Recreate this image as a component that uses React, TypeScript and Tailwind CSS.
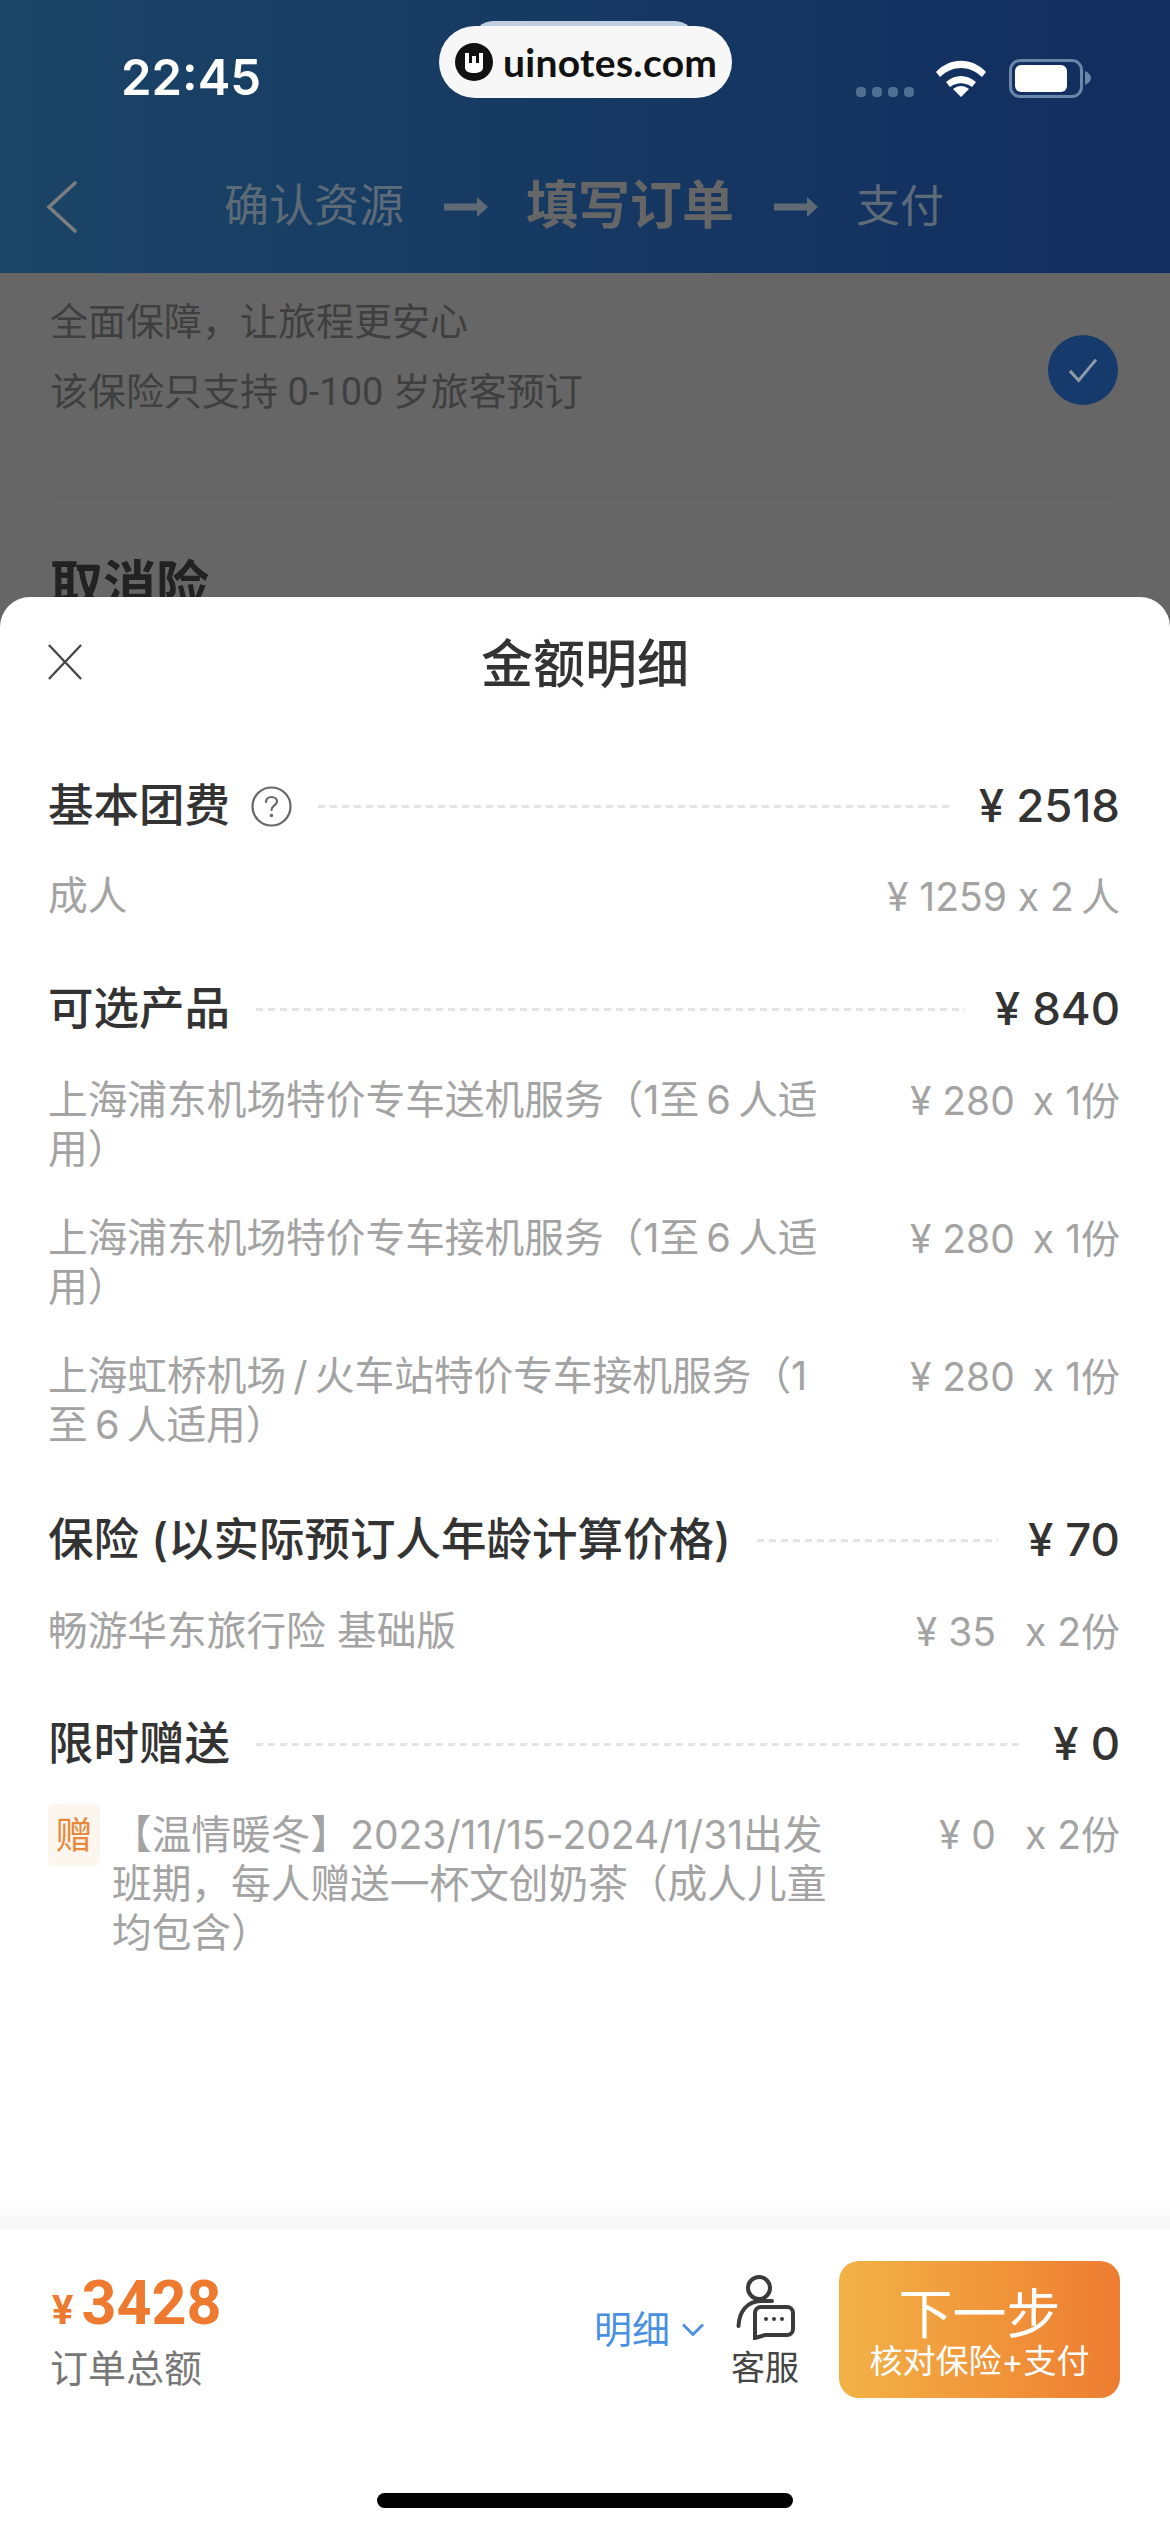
import React from 'react';

interface SubRow {
  text: React.ReactNode;
  price: string;
}

const DOTS = [0, 1, 2, 3];

const Line = () => (
  <div className="h-[3px] bg-[repeating-linear-gradient(90deg,#e4e4e4_0,#e4e4e4_7px,transparent_7px,transparent_12px)]" />
);

const Heading = ({ title, amount, help }: { title: string; amount: string; help?: boolean }) => (
  <div className="flex items-center h-[60px] text-[45.5px] font-medium text-[#333]">
    <span className="whitespace-nowrap">{title}</span>
    {help && (
      <svg viewBox="0 0 41 41" className="w-[41px] h-[41px] ml-[21px] text-[#666]" fill="none" stroke="currentColor">
        <circle cx="20.5" cy="20.5" r="19" strokeWidth="2.2" />
        <path d="M15 16c0-3 2.400-5 5.500-5s5.500 2 5.500 4.500c0 4-5.500 4-5.500 8.500" strokeWidth="2.2" strokeLinecap="round" />
        <circle cx="20.500" cy="29.500" r="1.700" fill="currentColor" stroke="none" />
      </svg>
    )}
    <div className="flex-1 ml-[26px] mr-[30px]">
      <Line />
    </div>
    <span className="whitespace-nowrap text-[45.5px]">{amount}</span>
  </div>
);

const Sub = ({ text, price }: SubRow) => (
  <div className="flex justify-between text-[39.7px] leading-[49px] text-[#a3a3a3]">
    <div className="w-[785px]">{text}</div>
    <div className="whitespace-nowrap text-[39px]">{price}</div>
  </div>
);

const Arrow = () => (
  <svg viewBox="0 0 44 20" className="w-[44px] h-[20px] text-[#5f6a75]" fill="currentColor">
    <path d="M0 6.500h33V0l11 10-11 10v-6.500H0z" />
  </svg>
);

const products: SubRow[] = [
  { text: '上海浦东机场特价专车送机服务（1至\u20096\u2009人适用）', price: '¥ 280\u00a0\u2009x 1份' },
  { text: '上海浦东机场特价专车接机服务（1至\u20096\u2009人适用）', price: '¥ 280\u00a0\u2009x 1份' },
  { text: '上海虹桥机场\u2009/\u2009火车站特价专车接机服务（1至\u20096\u2009人适用）', price: '¥ 280\u00a0\u2009x 1份' },
];

export default function App() {
  return (
    <div className='relative w-[1170px] h-[2532px] overflow-hidden bg-[#666666] [font-family:Roboto,"Noto_Sans_CJK_SC",sans-serif]'>
      {/* Header */}
      <div className="h-[273px] bg-gradient-to-r from-[#1b4466] to-[#122d5f]">
        <div className="flex items-center justify-between h-[156px] pl-[121px] pr-[79px]">
          <span className="text-[49px] font-semibold text-white [font-family:Inter,sans-serif]">22:45</span>
          <div className="flex items-center">
            <div className="flex gap-[6px] mr-[22px] mt-[28px]">
              {DOTS.map(d => (
                <i key={d} className="block w-[10px] h-[10px] rounded-[4px] bg-[#4f6e90]" />
              ))}
            </div>
            <svg viewBox="0 0 50 37" className="w-[50px] h-[37px]" fill="#fff">
              <path d="M0 12C14-3 36-3 50 12l-4 5C33 5 17 5 4 17z" />
              <path d="M10 22c9-8 21-8 30 0l-4 5c-7-5-15-5-22 0z" />
              <path d="M25 37l-8-8c5-4 11-4 16 0z" />
            </svg>
            <div className="flex items-center ml-[23px]">
              <div className="w-[74px] h-[39px] rounded-[11px] border-[3px] border-[#6a86a8] p-[3px]">
                <div className="w-[52px] h-full rounded-[6px] bg-white" />
              </div>
              <svg viewBox="0 0 6 14" className="w-[6px] h-[14px] ml-[2px]" fill="#6a86a8">
                <path d="M0 0c4 2 6 4 6 7s-2 5-6 7z" />
              </svg>
            </div>
          </div>
        </div>
        <div className="flex items-center h-[102px] pl-[46px] text-[#5d6a78]">
          <svg viewBox="0 0 32 52" className="w-[32px] h-[52px]" fill="none" stroke="#7b7d80" strokeWidth="3.6" strokeLinecap="round">
            <path d="M29 2L3 26l26 24" />
          </svg>
          <span className="ml-[146px] mr-[40px] text-[45px]">确认资源</span>
          <Arrow />
          <span className="ml-[38px] mr-[40px] text-[52px] font-bold text-[#666]">填写订单</span>
          <Arrow />
          <span className="ml-[38px] text-[44px]">支付</span>
        </div>
      </div>

      {/* Page behind the sheet */}
      <div className="pl-[50px] pr-[52px]">
        <div className="relative flex items-center justify-between h-[225px] border-b border-[#5f5f5f] pb-[30px]">
          <div className="mb-[26px] text-[38px] leading-[70px] text-[#3f3f3f]">
            <div>全面保障，让旅程更安心</div>
            <div>该保险只支持 0-100 岁旅客预订</div>
          </div>
          <div className="flex items-center justify-center w-[70px] h-[70px] rounded-full bg-[#163a6b]">
            <svg viewBox="0 0 36 30" className="w-[32px] h-[26px]" fill="none" stroke="#8f9aa8" strokeWidth="3.5">
              <path d="M3 16l10 11L33 3" />
            </svg>
          </div>
        </div>
        <div className="mt-[50px] text-[53px] font-bold text-[#222]">取消险</div>
      </div>

      {/* Watermark */}
      <div className="absolute left-[473px] top-[21px] w-[222px] h-[20px] rounded-t-[20px] bg-[#c0cfdd]" />
      <div className="absolute left-[439px] top-[26px] flex items-center w-[293px] h-[72px] rounded-[36px] bg-[#f7f7f7] pl-[16px]">
        <svg viewBox="0 0 38 38" className="w-[38px] h-[38px]">
          <circle cx="19" cy="19" r="19" fill="#111" />
          <path d="M10 10h4v10h3v-7h4v7h3V10h4v15c0 3-4 5-9 5s-9-2-9-5z" fill="#fff" />
        </svg>
        <span className="ml-[10px] text-[39px] tracking-[0.3px] font-bold text-[#111] [font-family:Lato,sans-serif]">uinotes.com</span>
      </div>

      {/* Amount details sheet */}
      <div className='absolute inset-x-0 bottom-0 flex flex-col h-[1935px] rounded-t-[30px] bg-white [font-family:Inter,"Noto_Sans_CJK_SC",sans-serif] [font-feature-settings:"calt"_0]'>
        <div className="relative flex items-center justify-center h-[136px]">
          <svg viewBox="0 0 38 38" className="absolute left-[47px] top-[47px] w-[36px] h-[36px]" fill="none" stroke="#444" strokeWidth="2.4">
            <path d="M2 1l34 36M36 1L2 37" />
          </svg>
          <span className="text-[52px] font-medium text-[#333]">金额明细</span>
        </div>

        <div className="flex-1 pt-[43px] pl-[48px] pr-[50px]">
          <Heading title="基本团费" amount="¥ 2518" help />
          <div className="mt-[36px]">
            <Sub text="成人" price={'¥ 1259 x 2\u2009人'} />
          </div>

          <div className="mt-[58px]">
            <Heading title="可选产品" amount="¥ 840" />
          </div>
          <div className="mt-[37px] flex flex-col gap-[40px]">
            {products.map((item, i) => (
              <Sub key={i} text={item.text} price={item.price} />
            ))}
          </div>

          <div className="mt-[60px]">
            <Heading title="保险 (以实际预订人年龄计算价格)" amount="¥ 70" />
          </div>
          <div className="mt-[37px]">
            <Sub text="畅游华东旅行险 基础版" price={'¥ 35\u00a0\u00a0\u2009x 2份'} />
          </div>

          <div className="mt-[58px]">
            <Heading title="限时赠送" amount="¥ 0" />
          </div>
          <div className="mt-[36px] flex justify-between text-[39.7px] leading-[49px] text-[#a3a3a3]">
            <div className="flex items-start w-[785px]">
              <span className="flex items-center justify-center shrink-0 w-[52px] h-[62px] -mt-[6px] rounded-[6px] bg-[#fdf6ef] text-[37px] text-[#e8883a]">赠</span>
              <div className="ml-[12px] w-[725px]">
                【温情暖冬】<span className="text-[39px]">2023/11/15-2024/1/31</span>出发班期，每人赠送一杯文创奶茶（成人儿童均包含）
              </div>
            </div>
            <div className="whitespace-nowrap text-[39px]">{'¥ 0\u00a0\u00a0\u2009x 2份'}</div>
          </div>
        </div>

        {/* Bottom bar */}
        <div className="relative h-[303px]">
          <div className="h-[30px] -mt-[30px] bg-gradient-to-b from-white to-[#f6f6f6]" />
          <div className="flex items-center h-[201px] pl-[52px] pr-[50px]">
            <div className="flex-1 mt-[5px]">
              <div className="flex items-baseline font-bold text-[#ee7a30] leading-[65px] [font-family:Roboto,sans-serif]">
                <span className="text-[40px]">¥</span>
                <span className="ml-[8px] text-[61px]">3428</span>
              </div>
              <div className="-ml-[2px] text-[38px] leading-[50px] text-[#777]">订单总额</div>
            </div>
            <div className="flex items-center text-[38px] text-[#4a90e2]">
              明细
              <svg viewBox="0 0 22 13" className="w-[22px] h-[13px] ml-[12px]" fill="none" stroke="currentColor" strokeWidth="2.800">
                <path d="M1 1.500l10 10 10-10" />
              </svg>
            </div>
            <div className="flex flex-col items-center ml-[26px] mt-[5px] w-[70px]">
              <svg viewBox="0 0 60 66" className="w-[60px] h-[66px]" fill="none" stroke="#3a3a3a" strokeWidth="4" strokeLinecap="round">
                <circle cx="24" cy="14" r="11" />
                <path d="M37 27H26C12 27 4 38 3.500 52" />
                <path d="M26 33h26a6 6 0 0 1 6 6v16a6 6 0 0 1-6 6H30l-10 3V39a6 6 0 0 1 6-6z" />
                <circle cx="31" cy="45" r="2" fill="#3a3a3a" stroke="none" />
                <circle cx="39" cy="45" r="2" fill="#3a3a3a" stroke="none" />
                <circle cx="47" cy="45" r="2" fill="#3a3a3a" stroke="none" />
              </svg>
              <span className="whitespace-nowrap text-[34px] leading-[44px] text-[#444] mt-[6px]">客服</span>
            </div>
            <div className="flex flex-col items-center justify-center ml-[39px] w-[281px] h-[137px] rounded-[20px] bg-gradient-to-r from-[#f2b246] to-[#ed7c31] text-white">
              <span className="mt-[5px] text-[54px] leading-[62px]">下一步</span>
              <span className="-mt-[5px] text-[33px] leading-[40px]">核对保险+支付</span>
            </div>
          </div>
          <div className="mx-auto mt-[63px] w-[416px] h-[15px] rounded-full bg-black" />
        </div>
      </div>
    </div>
  );
}
